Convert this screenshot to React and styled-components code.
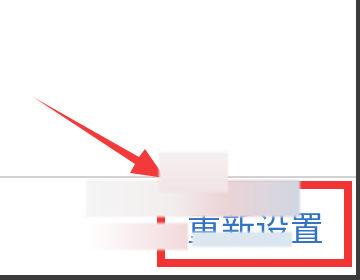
import React from 'react';
import styled, { createGlobalStyle } from 'styled-components';

const Global = createGlobalStyle`
  html, body {
    margin: 0;
    padding: 0;
    background: #3b3b3b;
    width: 360px;
    height: 280px;
    overflow: hidden;
  }
`

const Screen = styled.div`
  position: relative;
  width: 356px;
  height: 275px;
  background: #ffffff;
  display: flex;
  flex-direction: column;
`
const TopArea = styled.div`
  height: 176px;
`
const Divider = styled.div`
  height: 2px;
  background: #d2d2d2;
`
const Footer = styled.div`
  flex: 1;
  display: flex;
  justify-content: flex-end;
  align-items: flex-start;
  padding: 3px 4px 0 0;
`
const Highlight = styled.div`
  box-sizing: border-box;
  width: 195px;
  height: 86px;
  border: 8px solid #f33434;
  display: flex;
  justify-content: center;
  align-items: center;
  padding: 6px 0 0 2px;
`
const ResetLink = styled.span`
  font-family: "Noto Sans CJK SC", "Noto Sans", sans-serif;
  font-size: 34px;
  line-height: 1;
  color: #3373c6;
  letter-spacing: 0.3px;
  filter: blur(0.3px);
`
const Arrow = styled.svg`
  position: absolute;
  left: 0;
  top: 0;
  pointer-events: none;
`
const Smudge = styled.div`
  position: absolute;
  left: ${p => p.x}px;
  top: ${p => p.y}px;
  width: ${p => p.w}px;
  height: ${p => p.h}px;
  background: ${p => p.bg};
  filter: blur(1px);
`

const App = () => {
  return (
    <>
      <Global />
      <Screen>
        <TopArea />
        <Divider />
        <Footer>
          <Highlight>
            <ResetLink>重新设置</ResetLink>
          </Highlight>
        </Footer>
        <Arrow width="356" height="275" viewBox="0 0 356 275">
          <polygon
            points="33,97 139,157 145,149 165,178 130,173 135,164"
            fill="#f23a3a"
          />
        </Arrow>
        <Smudge x={86} y={180} w={214} h={37}
          bg="linear-gradient(90deg, #f5f5f5 0%, #f3eeee 40%, #ecd3d6 65%, #dcd6de 85%, #cfd7e2 100%)" />
        <Smudge x={159} y={152} w={69} h={40}
          bg="linear-gradient(180deg, #f6f0f0 0%, #f1e4e5 100%)" />
        <Smudge x={87} y={223} w={101} h={27}
          bg="linear-gradient(90deg, #ffffff 0%, #f8eced 50%, #f2d9db 100%)" />
        <Smudge x={192} y={232} w={100} h={15}
          bg="linear-gradient(90deg, #dfe8f1 0%, #d9e5ef 100%)" />
      </Screen>
    </>
  );
}

export default App;
